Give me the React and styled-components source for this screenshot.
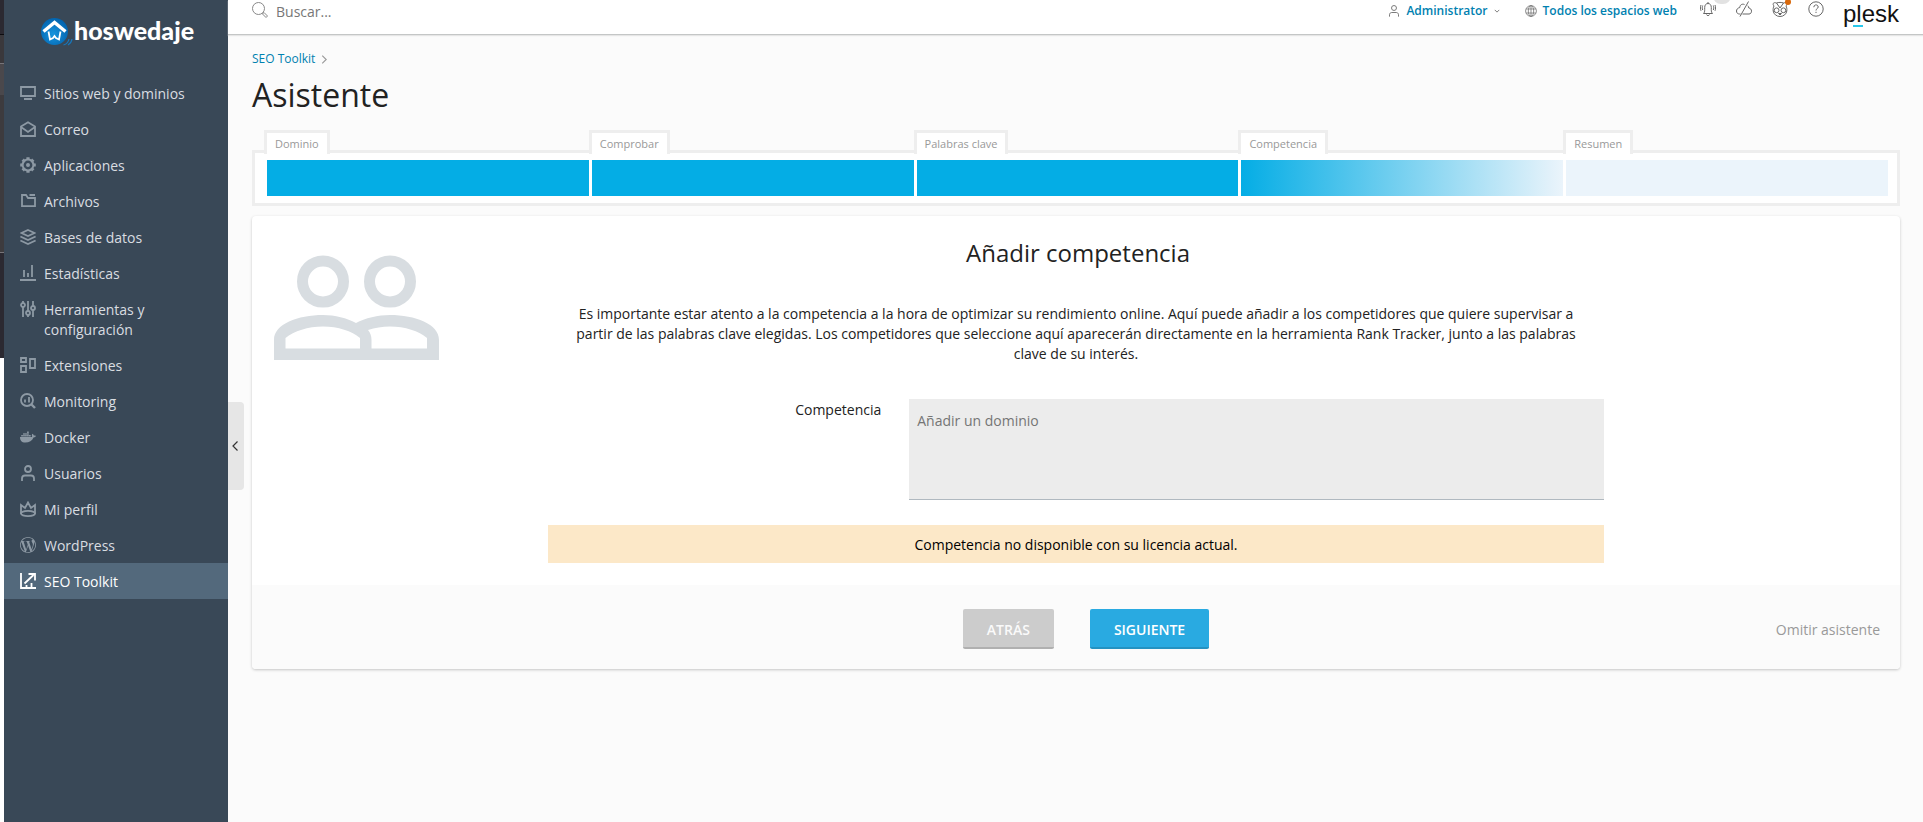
import styled, { createGlobalStyle } from "styled-components";
import { FaDocker } from "react-icons/fa";
import { SiWordpress } from "react-icons/si";

const Icon = ({ children, size = 16, width = 1.8 }) => (
  <svg
    width={size}
    height={size}
    viewBox="0 0 16 16"
    fill="none"
    stroke="currentColor"
    strokeWidth={width}
    aria-hidden="true"
  >
    {children}
  </svg>
);

const menu = [
  {
    label: "Sitios web y dominios",
    icon: (
      <Icon>
        <path d="M1 2h14v9H1zM4 14h8" />
      </Icon>
    ),
  },
  {
    label: "Correo",
    icon: (
      <Icon>
        <path d="M1 5.5 8 1.2l7 4.3V15H1zM1 6l7 5 7-5" />
      </Icon>
    ),
  },
  {
    label: "Aplicaciones",
    icon: (
      <Icon>
        <circle cx="8" cy="8" r="5.4" strokeWidth="2" />
        <circle cx="8" cy="8" r="1" strokeWidth="2" />
        <path
          strokeWidth="3.2"
          d="M8 .2v2M8 13.8v2M.2 8h2M13.8 8h2M2.7 2.7l1.2 1.2M12.1 12.1l1.2 1.2M13.3 2.7l-1.2 1.2M3.9 12.1l-1.2 1.2"
        />
      </Icon>
    ),
  },
  {
    label: "Archivos",
    icon: (
      <Icon width={1.8}>
        <path d="M9 5h6v8.200H2V2h4l2 3h1M9.500 2H15" />
      </Icon>
    ),
  },
  {
    label: "Bases de datos",
    icon: (
      <Icon width={1.8}>
        <path d="m8 1 6.500 3L8 7 1.500 4zM.4 7.500 8 11l7.600-3.500M.4 11.500 8 15l7.600-3.500" />
      </Icon>
    ),
  },
  {
    label: "Estadísticas",
    icon: (
      <Icon>
        <path d="M0 15h16M4 12V5M8 12V8M12 12V0" />
      </Icon>
    ),
  },
  {
    label: "Herramientas y configuración",
    icon: (
      <Icon width={1.8}>
        <circle cx="3" cy="4" r="2" />
        <circle cx="8" cy="12" r="2" />
        <circle cx="13" cy="7" r="2" />
        <path d="M3 0v2M3 6v10M8 0v10M8 14v2M13 0v5M13 9v7" />
      </Icon>
    ),
  },
  {
    label: "Extensiones",
    icon: (
      <Icon>
        <path d="M1 1h5v4H1zM1 9h5v6H1zM10 2h5v9h-5z" />
      </Icon>
    ),
  },
  {
    label: "Monitoring",
    icon: (
      <Icon>
        <circle cx="7" cy="7" r="6" />
        <path d="M5 9.500V6.500M9 9.500V4" strokeWidth="1.800" />
        <path d="m11 11 4 4" strokeWidth="2.400" />
      </Icon>
    ),
  },
  { label: "Docker", icon: <FaDocker size={16} /> },
  {
    label: "Usuarios",
    icon: (
      <Icon>
        <circle cx="8" cy="4" r="3" />
        <path d="M2 16v-2.500C2 11.500 3.500 10.500 5 10.500h6c1.500 0 3 1 3 3V16" />
      </Icon>
    ),
  },
  {
    label: "Mi perfil",
    icon: (
      <Icon width={1.8}>
        <path d="M1 13V4l4 3 3-5.500L11 7l4-3v9" />
        <ellipse cx="8" cy="12.500" rx="7" ry="2.600" />
      </Icon>
    ),
  },
  { label: "WordPress", icon: <SiWordpress size={16} /> },
  {
    label: "SEO Toolkit",
    active: true,
    icon: (
      <Icon>
        <path d="M1 0v15h15M6.500 15v-3M11.500 15v-5M4.500 10.500 13.500 2M8.500 1H15v6.500" />
      </Icon>
    ),
  },
];

const steps = [
  { label: "Dominio", state: "done" },
  { label: "Comprobar", state: "done" },
  { label: "Palabras clave", state: "done" },
  { label: "Competencia", state: "current" },
  { label: "Resumen", state: "pending" },
];

const Logo = () => (
  <svg width="32" height="28" viewBox="0 0 32 28" aria-hidden="true">
    <defs>
      <radialGradient id="ball" cx="45%" cy="60%" r="60%">
        <stop offset="0" stopColor="#1795de" />
        <stop offset="1" stopColor="#0263ae" />
      </radialGradient>
    </defs>
    <circle cx="13.500" cy="13.500" r="13.500" fill="url(#ball)" />
    <path
      d="M2.500 13.500 13.500 4.500l11 9"
      fill="none"
      stroke="#fff"
      strokeWidth="3.400"
    />
    <path
      d="M7.500 13.500 9 21.500l3-1.500 1.500-2 1.500 2 3 1.500 1.500-8"
      fill="none"
      stroke="#fff"
      strokeWidth="1.800"
    />
    <path
      d="M22.500 27c3-1 5-3 5.500-6M27 27c2-1 3.500-3 4-6"
      fill="none"
      stroke="#1678bd"
      strokeWidth="1.200"
    />
  </svg>
);

const Competitors = () => (
  <svg width="165" height="105" viewBox="0 0 165 105" aria-hidden="true">
    <g fill="none" stroke="#d8dde1" strokeWidth="11">
      <circle cx="49" cy="26.500" r="20.500" />
      <circle cx="116" cy="26.500" r="20.500" />
    </g>
    <path
      fill="#d8dde1"
      fillRule="evenodd"
      d="M0 105V85C0 69 24 60 49 60c12 0 24 3 33 8 9-5 22-8 34-8 25 0 49 9 49 25v20zM11.500 93.500V83C20 76 34 71.500 49 71.500S78 76 86 83v10.500zM97.500 93.500V85c0-4-1-7-3.500-10 7-2 14-3.500 22-3.500 15 0 29 4.500 37 11.500v10.500z"
    />
  </svg>
);

const App = () => {
  return (
    <Page>
      <GlobalStyle />
      <Edge />
      <Sidebar>
        <Brand href="#">
          <Logo />
          <span>hoswedaje</span>
        </Brand>
        <nav>
          {menu.map((item) => (
            <MenuLink href="#" key={item.label} $active={item.active}>
              {item.icon}
              <span>{item.label}</span>
            </MenuLink>
          ))}
        </nav>
      </Sidebar>
      <Collapse aria-label="Contraer menú">
        <Icon size={12} width={1.6}>
          <path d="M10 2 4 8l6 6" />
        </Icon>
      </Collapse>

      <Main>
        <Header>
          <Search>
            <Icon width={1}>
              <circle cx="6.500" cy="6.500" r="6" />
              <path d="m11 11 1-.5 3.500 3.500-1.500 1.500-3.500-3.500z" />
            </Icon>
            <input placeholder="Buscar..." aria-label="Buscar" />
          </Search>
          <HeaderLink href="#">
            <Icon size={12} width={1.3}>
              <circle cx="8" cy="4" r="3.300" />
              <path d="M2 15.500v-2.500c0-2 1.500-3 3-3h6c1.500 0 3 1 3 3v2.500" />
            </Icon>
            Administrator
            <Icon size={6} width={2.5}>
              <path d="m2 5 6 6 6-6" />
            </Icon>
          </HeaderLink>
          <HeaderLink href="#">
            <Icon size={12} width={1.1}>
              <circle cx="8" cy="8" r="7.200" />
              <ellipse cx="8" cy="8" rx="3.600" ry="7.200" />
              <path d="M8 1v14M1.500 5.300h13M1.500 10.700h13" />
            </Icon>
            Todos los espacios web
          </HeaderLink>
          <Tools>
            <Tool aria-label="Notificaciones">
              <Icon width={1}>
                <path d="M3.500 12.500h9c-1-1-1.200-2-1.200-4V6.500C11.300 4 10 2.500 8 2.500S4.700 4 4.700 6.500v2c0 2-.2 3-1.200 4zM6.500 13.500c.5 1.500 2.500 1.500 3 0M8 1v1.500M2.700 4.500c-.6 1.500-.6 3 0 4.500M1 4C.2 6 .2 8 1 9.800M13.300 4.500c.6 1.500.6 3 0 4.500M15 4c.8 2 .8 4 0 5.800" />
              </Icon>
              <Count />
            </Tool>
            <Tool aria-label="Nube">
              <Icon width={1}>
                <path d="M8.500 3.500C6 2.500 3.800 4 3.800 6.500 1.500 7 .5 8.500.5 10c0 2 1.300 3 3 3h1M6.500 13H13c1.500 0 2.500-1.200 2.500-2.800 0-1.700-1-2.900-2.700-3.200-.1-1-.5-1.800-1-2.300M12.500.5 4 15.500" />
              </Icon>
            </Tool>
            <Tool aria-label="Asistencia">
              <Icon width={1}>
                <path d="M2 5C.2 3 1.300.8 4.500 2c2-.8 5-.8 7 0 3.200-1.200 4.300 1 2.500 3 .8 1.500 1 3 .8 5-.3 3-3.300 5.500-6.800 5.500S1.500 13 1.200 10C1 8 1.200 6.500 2 5zM4.500 2 8 7l3.500-5M6.500 12.500h3L8 14z" />
                <circle cx="4.600" cy="9.300" r="2.400" />
                <circle cx="11.400" cy="9.300" r="2.400" />
              </Icon>
              <Dot />
            </Tool>
            <Tool aria-label="Ayuda">
              <Icon width={1}>
                <circle cx="8" cy="8" r="7.200" />
                <path d="M5.800 6.200c0-3 4.400-3 4.400-.2C10.200 7.600 8 7.500 8 9.500M8 10.800V12" />
              </Icon>
            </Tool>
          </Tools>
          <Plesk href="#">
            p<u>l</u>esk
          </Plesk>
        </Header>

        <Content>
          <Breadcrumb>
            <a href="#">SEO Toolkit</a>
            <Icon size={9} width={2}>
              <path d="m4 1 7 7-7 7" />
            </Icon>
          </Breadcrumb>
          <h1>Asistente</h1>

          <Steps>
            {steps.map((step) => (
              <Step key={step.label} $state={step.state}>
                <StepLabel>{step.label}</StepLabel>
              </Step>
            ))}
          </Steps>

          <Card>
            <CardBody>
              <Figure>
                <Competitors />
              </Figure>
              <Form id="wizard">
                <h2>Añadir competencia</h2>
                <p>
                  Es importante estar atento a la competencia a la hora de
                  optimizar su rendimiento online. Aquí puede añadir a los
                  competidores que quiere supervisar a partir de las palabras
                  clave elegidas. Los competidores que seleccione aquí
                  aparecerán directamente en la herramienta Rank Tracker, junto
                  a las palabras clave de su interés.
                </p>
                <Field>
                  <label htmlFor="domains">Competencia</label>
                  <textarea id="domains" placeholder="Añadir un dominio" />
                </Field>
                <Warning>
                  Competencia no disponible con su licencia actual.
                </Warning>
              </Form>
            </CardBody>
            <CardFooter>
              <Buttons>
                <Button type="button">Atrás</Button>
                <Button type="button" $primary>
                  Siguiente
                </Button>
              </Buttons>
              <Skip href="#">Omitir asistente</Skip>
            </CardFooter>
          </Card>
        </Content>
      </Main>
    </Page>
  );
};
export default App;

const GlobalStyle = createGlobalStyle`
  * {
    box-sizing: border-box;
  }
  body {
    margin: 0;
    background: #fbfbfb;
    color: #222;
    font-family: "Open Sans", sans-serif;
    font-size: 14px;
    line-height: 20px;
  }
  a {
    color: #0081b0;
    text-decoration: none;
  }
  button, input, textarea {
    font: inherit;
    border: 0;
    outline: 0;
  }
  svg {
    flex-shrink: 0;
  }
`;

const Page = styled.div`
  display: flex;
  min-height: 100vh;
`;

const Edge = styled.div`
  width: 4px;
  flex-shrink: 0;
  background: linear-gradient(
    #2b2931 34px,
    #0d0c10 34px 35px,
    #3a383c 35px 63px,
    #77757a 63px 64px,
    #4a484c 64px 95px,
    #3d3b3e 95px 252px,
    #77757a 252px 253px,
    #2b2931 253px 358px,
    #fff 358px
  );
`;

const Sidebar = styled.aside`
  width: 224px;
  flex-shrink: 0;
  background: #394857;
`;

const Brand = styled.a`
  display: flex;
  gap: 1px;
  height: 75px;
  padding: 18px 0 0 37px;
  color: #fff;
  font-family: Lato, sans-serif;
  font-size: 25px;
  font-weight: 900;
  line-height: 24px;
`;

const MenuLink = styled.a`
  display: flex;
  gap: 8px;
  padding: 9px 32px 7px 16px;
  color: ${(props) => (props.$active ? "#fff" : "#d9dde1")};
  background: ${(props) => (props.$active ? "#53697c" : "transparent")};
  svg {
    margin-top: 1px;
    color: ${(props) => (props.$active ? "#fff" : "#8d99a4")};
  }
  span {
    flex: 1;
  }
`;

const Collapse = styled.button`
  position: fixed;
  left: 228px;
  top: calc(50% - 9px);
  display: flex;
  align-items: center;
  justify-content: center;
  width: 16px;
  height: 88px;
  padding: 0;
  border-radius: 0 4px 4px 0;
  background: #e6e6e6;
  color: #333;
`;

const Main = styled.main`
  flex: 1;
  min-width: 0;
`;

const Header = styled.header`
  display: flex;
  height: 35px;
  padding: 0 23px 0 24px;
  background: #fff;
  border-bottom: 1px solid #c4c6c6;
  box-shadow: 0 1px 1px #e6e6e6;
`;

const Search = styled.label`
  display: flex;
  flex: 1;
  gap: 8px;
  color: #888;
  svg {
    margin-top: 2px;
  }
  input {
    flex: 1;
    height: 22px;
    padding: 0;
    background: none;
  }
  input::placeholder {
    color: #777;
  }
`;

const HeaderLink = styled.a`
  display: flex;
  align-items: center;
  gap: 6px;
  height: 21px;
  margin-right: 25px;
  font-size: 12px;
  font-weight: 600;
  svg {
    color: #777;
  }
`;

const Tools = styled.div`
  display: flex;
  gap: 20px;
  margin: 0 19px 0 -2px;
`;

const Tool = styled.button`
  position: relative;
  display: flex;
  width: 16px;
  height: 18px;
  padding: 1px 0 0;
  background: none;
  color: #666;
`;

/* hangs off the icon corner, mostly above the visible bar */
const Count = styled.span`
  position: absolute;
  left: 13px;
  top: -12px;
  width: 18px;
  height: 16px;
  border-radius: 8px;
  background: #e2e2e2;
`;

const Dot = styled.span`
  position: absolute;
  right: -3px;
  top: -1px;
  width: 6px;
  height: 6px;
  border-radius: 50%;
  background: #d9680a;
`;

const Plesk = styled.a`
  width: 57px;
  color: #111;
  font-family: "Liberation Sans", sans-serif;
  font-size: 24px;
  line-height: 27px;
  u {
    position: relative;
    text-decoration: none;
  }
  u::after {
    content: "";
    position: absolute;
    left: -3px;
    bottom: 0;
    width: 10px;
    height: 2px;
    background: #28c8ec;
  }
`;

const Content = styled.div`
  padding: 14px 23px 24px 24px;
  h1 {
    margin: 3px 0 32px;
    font-size: 32px;
    font-weight: 400;
    line-height: 46px;
  }
`;

const Breadcrumb = styled.nav`
  display: flex;
  align-items: center;
  gap: 5px;
  color: #999;
  font-size: 12px;
`;

const Steps = styled.div`
  display: flex;
  gap: 3px;
  padding: 7px 9px 7px 12px;
  border: 3px solid #eee;
  background: #fff;
`;

const fills = {
  done: "#04ade5",
  current: "linear-gradient(to right, #04ade5, #ebf4fb)",
  pending: "#ebf4fb",
};

const Step = styled.div`
  position: relative;
  flex: 1;
  height: 36px;
  background: ${(props) => fills[props.$state]};
`;

const StepLabel = styled.span`
  position: absolute;
  left: -3px;
  top: -30px;
  height: 24px;
  padding: 1px 8px 0;
  border: 3px solid #eee;
  border-bottom: 0;
  background: #fff;
  color: #999;
  font-size: 11px;
  white-space: nowrap;
`;

const Card = styled.section`
  margin-top: 10px;
  border-radius: 4px;
  background: #fff;
  box-shadow: 0 1px 3px rgb(0 0 0 / 22%);
`;

const CardBody = styled.div`
  display: grid;
  grid-template-columns: 296px 1fr 296px;
  padding-bottom: 22px;
`;

const Figure = styled.div`
  padding: 39px 22px;
`;

const Form = styled.form`
  text-align: center;
  h2 {
    margin: 20px 0 35px;
    padding-left: 4px;
    font-size: 24px;
    font-weight: 400;
    line-height: 33px;
  }
  p {
    margin: 0 20px 35px;
  }
`;

const Field = styled.div`
  display: grid;
  grid-template-columns: 13fr 25fr;
  label {
    padding: 1px 28px;
    text-align: right;
  }
  textarea {
    height: 101px;
    padding: 12px 8px;
    border-bottom: 1px solid #b0b9c0;
    background: #ececec;
    resize: none;
  }
  textarea::placeholder {
    color: #757575;
  }
`;

const Warning = styled.div`
  margin-top: 25px;
  padding: 10px 8px 8px;
  background: #fce8c8;
  color: #000;
`;

const CardFooter = styled.footer`
  display: grid;
  grid-template-columns: 1fr auto 1fr;
  align-items: center;
  padding: 24px 20px 20px;
  border-radius: 0 0 4px 4px;
  background: #fbfbfb;
`;

const Buttons = styled.div`
  grid-column: 2;
  display: flex;
  gap: 36px;
  padding-left: 20px;
`;

const Button = styled.button`
  height: 40px;
  padding: 3px 24px 0;
  border-bottom: 2px solid ${(props) => (props.$primary ? "#2492c1" : "#b0b0b0")};
  border-radius: 2px;
  background: ${(props) => (props.$primary ? "#29aae1" : "#ccc")};
  color: ${(props) => (props.$primary ? "#fff" : "#fafafa")};
  font-weight: 600;
  text-transform: uppercase;
`;

const Skip = styled.a`
  justify-self: end;
  padding-top: 2px;
  color: #999;
`;
